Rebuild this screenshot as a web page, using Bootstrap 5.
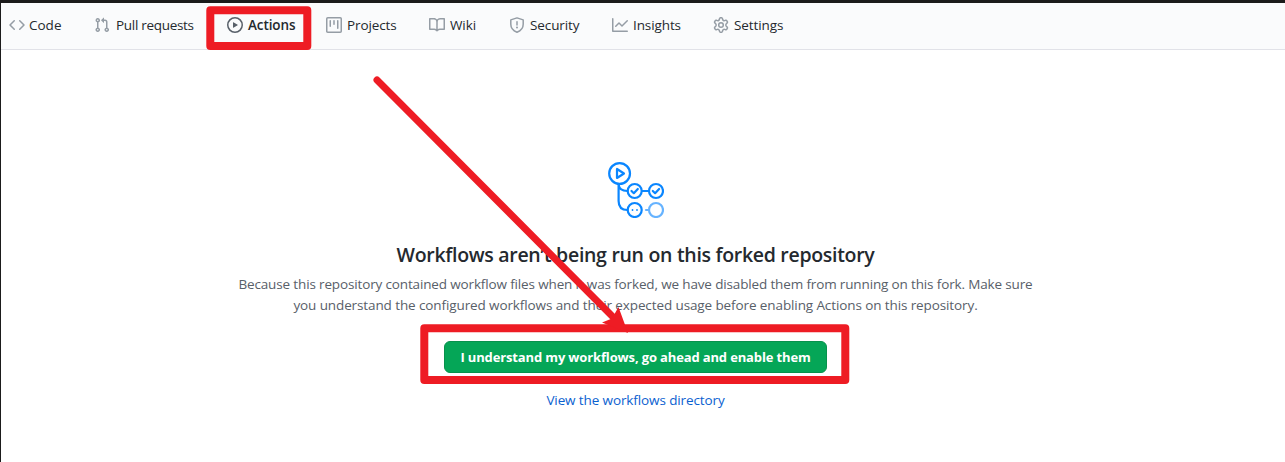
<!DOCTYPE html>
<html lang="en">
<head>
<meta charset="utf-8">
<title>Actions</title>
<link href="https://cdn.jsdelivr.net/npm/bootstrap@5.3.0/dist/css/bootstrap.min.css" rel="stylesheet">
<style>
body{font-family:"Open Sans","Noto Sans",sans-serif;font-size:13.5px;line-height:21px;color:#24292e;height:462px;overflow:hidden;border-left:1px solid #1b1b1b}
.topbar{height:3px;background:#1b1b1b}
.repo-nav{height:47px;background:#fafbfc;border-bottom:1px solid #e1e2e8;display:grid;grid-template-columns:85px 133px 99px 103px 80px 103px 101px 90px;padding-left:8px;padding-bottom:2px}
.repo-nav a{color:#24292e;text-decoration:none;font-size:13.5px;letter-spacing:-.1px;white-space:nowrap;gap:5px}
.repo-nav svg{width:16px;height:16px;fill:#959da5;flex:none}
.repo-nav .line{fill:none;stroke:#959da5;stroke-width:1.5;stroke-linecap:round;stroke-linejoin:round}
.repo-nav .current{font-weight:600}
.repo-nav .current svg{fill:#586069}
.repo-nav .pulls{letter-spacing:-.3px;gap:6px}
.repo-nav .code-tab{gap:4px;letter-spacing:0}
.blank{padding:112px 15px 0 0}
.blank h1{font-size:19.5px;line-height:30px;font-weight:600;letter-spacing:-.3px;margin:22px 0 4px}
.blank p{color:#586069;margin:0;white-space:nowrap;letter-spacing:-.145px}
.blank .second{letter-spacing:-.105px}
.btn-enable{--bs-btn-color:#fff;--bs-btn-bg:#05a657;--bs-btn-border-color:#07914c;--bs-btn-hover-bg:#05984f;--bs-btn-hover-color:#fff;--bs-btn-border-radius:6px;width:383px;height:32px;padding:0;font-size:13px;letter-spacing:-.14px;font-weight:700;line-height:30px;margin-top:25px;white-space:nowrap}
.dirlink{color:#0b61d0;text-decoration:none;margin-top:17px;letter-spacing:-.11px}
.notes{left:0;top:0;pointer-events:none}
</style>
</head>
<body class="position-relative">
<div class="topbar"></div>
<nav class="repo-nav">
<a href="#" class="d-flex align-items-center code-tab"><svg viewBox="0 0 16 16"><path d="M4.72 3.22a.75.75 0 011.06 1.06L2.06 8l3.72 3.72a.75.75 0 11-1.06 1.06L.47 8.53a.75.75 0 010-1.06l4.25-4.25zm6.56 0a.75.75 0 10-1.06 1.06L13.94 8l-3.72 3.72a.75.75 0 101.06 1.06l4.25-4.25a.75.75 0 000-1.06l-4.25-4.25z"/></svg><span>Code</span></a>
<a href="#" class="d-flex align-items-center pulls"><svg viewBox="0 0 16 16"><path fill-rule="evenodd" d="M7.177 3.073L9.573.677A.25.25 0 0110 .854v4.792a.25.25 0 01-.427.177L7.177 3.427a.25.25 0 010-.354zM3.75 2.5a.75.75 0 100 1.5.75.75 0 000-1.5zm-2.25.75a2.25 2.25 0 113 2.122v5.256a2.251 2.251 0 11-1.5 0V5.372A2.25 2.25 0 011.5 3.25zM11 2.5h-1V4h1a1 1 0 011 1v5.628a2.251 2.251 0 101.5 0V5A2.5 2.5 0 0011 2.5zm1 10.25a.75.75 0 111.5 0 .75.75 0 01-1.5 0zM3.75 12a.75.75 0 100 1.5.75.75 0 000-1.5z"/></svg><span>Pull requests</span></a>
<a href="#" class="d-flex align-items-center current"><svg viewBox="0 0 16 16"><path fill-rule="evenodd" d="M1.5 8a6.5 6.5 0 1113 0 6.5 6.5 0 01-13 0zM8 0a8 8 0 100 16A8 8 0 008 0zM6.379 5.227A.25.25 0 006 5.442v5.117a.25.25 0 00.379.214l4.264-2.559a.25.25 0 000-.428L6.379 5.227z"/></svg><span>Actions</span></a>
<a href="#" class="d-flex align-items-center"><svg viewBox="0 0 16 16"><path fill-rule="evenodd" d="M1.75 0A1.75 1.75 0 000 1.75v12.5C0 15.216.784 16 1.75 16h12.5A1.75 1.75 0 0016 14.25V1.75A1.75 1.75 0 0014.25 0H1.75zM1.5 1.75a.25.25 0 01.25-.25h12.5a.25.25 0 01.25.25v12.5a.25.25 0 01-.25.25H1.75a.25.25 0 01-.25-.25V1.75zM11.75 3a.75.75 0 00-.75.75v7.5a.75.75 0 001.5 0v-7.5a.75.75 0 00-.75-.75zm-8.25.75a.75.75 0 011.5 0v5.5a.75.75 0 01-1.5 0v-5.5zM8 3a.75.75 0 00-.75.75v3.5a.75.75 0 001.5 0v-3.5A.75.75 0 008 3z"/></svg><span>Projects</span></a>
<a href="#" class="d-flex align-items-center"><svg viewBox="0 0 16 16"><path fill-rule="evenodd" d="M0 1.75A.75.75 0 01.75 1h4.253c1.227 0 2.317.59 3 1.501A3.744 3.744 0 0111.006 1h4.245a.75.75 0 01.75.75v10.5a.75.75 0 01-.75.75h-4.507a2.25 2.25 0 00-1.591.659l-.622.621a.75.75 0 01-1.06 0l-.622-.621A2.25 2.25 0 005.258 13H.75a.75.75 0 01-.75-.75V1.75zm8.755 3a2.25 2.25 0 012.25-2.25H14.5v9h-3.757c-.71 0-1.4.201-1.992.572l.004-7.322zm-1.504 7.324l.004-5.073-.002-2.253A2.25 2.25 0 005.003 2.5H1.5v9h3.757a3.75 3.75 0 011.994.574z"/></svg><span>Wiki</span></a>
<a href="#" class="d-flex align-items-center"><svg viewBox="0 0 16 16"><path class="line" d="M8 .9L14.2 2.9V7.2C14.2 11 12 13.6 8 15.2 4 13.6 1.8 11 1.8 7.2V2.9ZM8 4.8V8"/><circle cx="8" cy="10.6" r="1"/></svg><span>Security</span></a>
<a href="#" class="d-flex align-items-center"><svg viewBox="0 0 16 16"><path fill-rule="evenodd" d="M1.5 1.75a.75.75 0 00-1.5 0v12.5c0 .414.336.75.75.75h14.5a.75.75 0 000-1.5H1.5V1.75zm14.28 2.53a.75.75 0 00-1.06-1.06L10 7.94 7.53 5.47a.75.75 0 00-1.06 0L3.22 8.72a.75.75 0 001.06 1.06L7 7.06l2.47 2.47a.75.75 0 001.06 0l5.25-5.25z"/></svg><span>Insights</span></a>
<a href="#" class="d-flex align-items-center"><svg viewBox="0 0 16 16"><circle class="line" cx="8" cy="8" r="2.3"/><path class="line" d="M7.4 .8Q8 .7 8.6 .8 9.2 .9 9.4 1.5L9.7 2.6Q9.9 3.1 10.3 3.3 10.9 3.8 11.6 3.6L12.7 3.3Q13.4 3.1 13.7 3.6L14.4 4.8Q14.6 5.4 14.2 5.9L13.3 6.7Q12.8 7.2 12.9 8 12.8 8.8 13.3 9.3L14.2 10.1Q14.6 10.6 14.4 11.2L13.7 12.4Q13.4 12.9 12.7 12.7L11.6 12.4Q10.9 12.2 10.3 12.7 9.9 12.9 9.7 13.4L9.4 14.5Q9.2 15.1 8.6 15.2 8 15.3 7.4 15.2 6.8 15.1 6.6 14.5L6.3 13.4Q6.1 12.9 5.7 12.7 5.1 12.2 4.4 12.4L3.3 12.7Q2.6 12.9 2.3 12.4L1.6 11.2Q1.4 10.6 1.8 10.1L2.7 9.3Q3.2 8.8 3.1 8 3.2 7.2 2.7 6.7L1.8 5.9Q1.4 5.4 1.6 4.8L2.3 3.6Q2.6 3.1 3.3 3.3L4.4 3.6Q5.1 3.8 5.7 3.3 6.1 3.1 6.3 2.6L6.6 1.5Q6.8 .9 7.4 .8Z"/></svg><span>Settings</span></a>
</nav>
<main class="blank d-flex flex-column align-items-center text-center">
<svg width="56" height="56" viewBox="0 0 56 56" fill="none" stroke="#0a86ff" stroke-width="2.2" stroke-linecap="round" stroke-linejoin="round">
<circle cx="11.6" cy="11.5" r="10.4"/><path d="M9 7v9l7-4.500z"/>
<path d="M10.600 22v17Q10.600 48 19.500 48M10.600 22Q11 29 19.500 29M34 29h7"/>
<circle cx="26.700" cy="29" r="7"/><circle cx="48" cy="29" r="7"/><circle cx="26.700" cy="48" r="7"/>
<path d="M23.500 29l2.300 2.200 4-4.200M44.800 29l2.300 2.200 4-4.200"/>
<path d="M24.500 48h.01M29 48h.01" stroke-width="1.800"/>
<g opacity=".62"><circle cx="48" cy="48" r="7"/><path d="M38 48h2"/></g>
</svg>
<h1>Workflows aren’t being run on this forked repository</h1>
<p>Because this repository contained workflow files when it was forked, we have disabled them from running on this fork. Make sure<br><span class="second">you understand the configured workflows and their expected usage before enabling Actions on this repository.</span></p>
<button class="btn btn-enable">I understand my workflows, go ahead and enable them</button>
<a href="#" class="dirlink">View the workflows directory</a>
</main>
<svg class="notes position-absolute" width="1284" height="462" viewBox="1 0 1284 462" fill="none" stroke="#ee1c24">
<rect x="210.300" y="10.300" width="97" height="35.700" stroke-width="8" stroke-linejoin="round"/>
<rect x="424.300" y="328.300" width="421" height="51.700" stroke-width="8" stroke-linejoin="round"/>
<path d="M377 80L616 320" stroke-width="7" stroke-linecap="round"/>
<path d="M628 333L602 322.500 612 318.500 618.500 307z" fill="#ee1c24" stroke="none"/>
</svg>
<script src="https://cdn.jsdelivr.net/npm/bootstrap@5.3.0/dist/js/bootstrap.bundle.min.js"></script>
</body>
</html>
